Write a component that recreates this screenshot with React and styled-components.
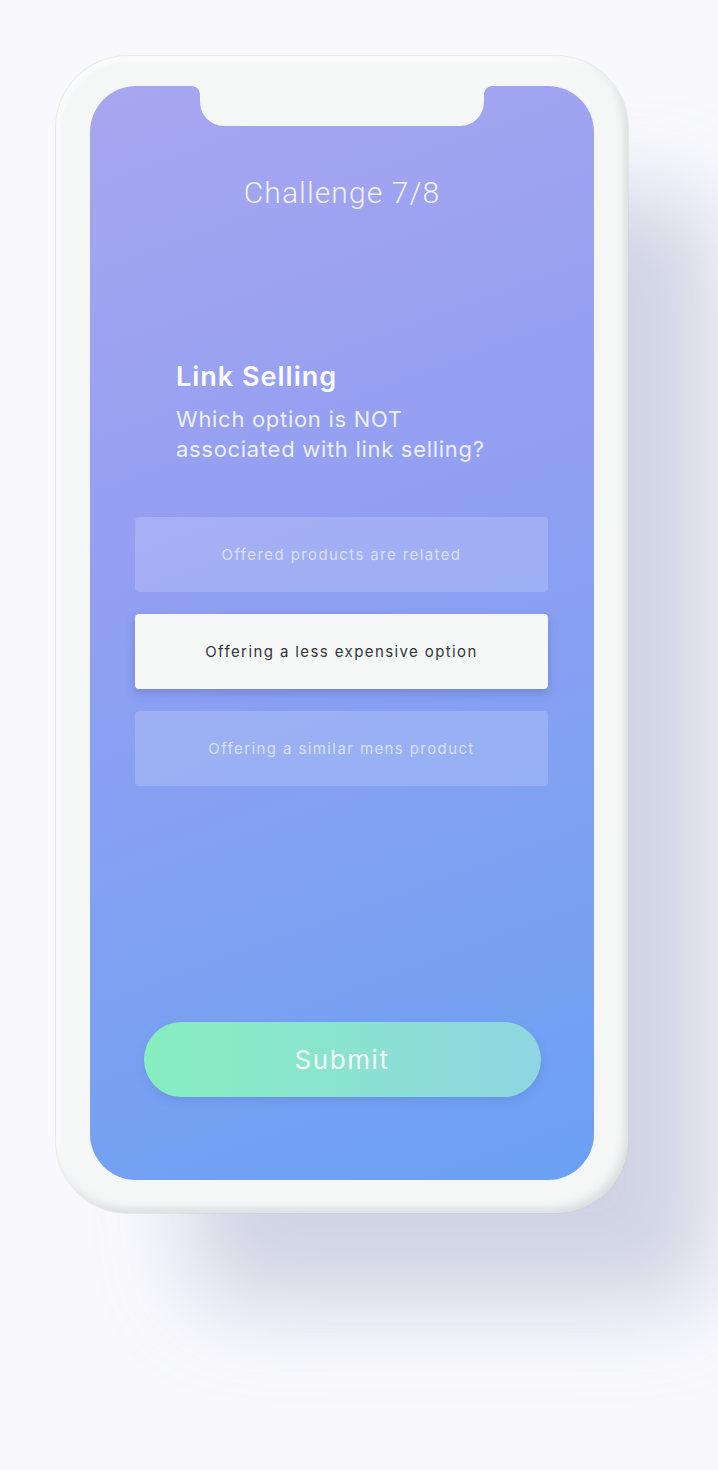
import React from 'react';
import styled, { createGlobalStyle } from 'styled-components';

const FRAME = '#f5f7f7';
const SANS = 'Inter, Roboto, "Liberation Sans", sans-serif';

const GlobalStyle = createGlobalStyle`
  html, body {
    margin: 0;
    padding: 0;
    background: #f9f9fd;
    font-family: ${SANS};
  }
`;

const options = [
  { label: 'Offered products are related', selected: false },
  { label: 'Offering a less expensive option', selected: true },
  { label: 'Offering a similar mens product', selected: false },
];

const App = () => (
  <>
    <GlobalStyle />
    <Page>
      <Phone>
        <Screen>
          <Notch />
          <Title>Challenge 7/8</Title>
          <Question>
            <Topic>Link Selling</Topic>
            <Prompt>
              Which option is NOT
              <br />
              associated with link selling?
            </Prompt>
          </Question>
          <OptionList>
            {options.map((o) => (
              <Option key={o.label} $selected={o.selected}>
                {o.label}
              </Option>
            ))}
          </OptionList>
          <SubmitButton type="button">Submit</SubmitButton>
        </Screen>
      </Phone>
    </Page>
  </>
);

const Page = styled.div`
  width: 718px;
  height: 1470px;
  padding: 56px 0 0 56px;
  box-sizing: border-box;
  overflow: hidden;
`;

const Phone = styled.div`
  width: 572px;
  height: 1157px;
  box-sizing: border-box;
  padding: 30px 34px 33px 34px;
  border-radius: 72px;
  background: ${FRAME};
  box-shadow:
    inset -4px -5px 8px rgba(120, 130, 135, 0.22),
    inset 3px 3px 6px rgba(255, 255, 255, 0.9),
    0 0 0 1px rgba(200, 205, 210, 0.35),
    110px 115px 90px -25px rgba(150, 160, 190, 0.42);
`;

const Screen = styled.div`
  height: 100%;
  box-sizing: border-box;
  border-radius: 46px;
  padding-bottom: 83px;
  display: flex;
  flex-direction: column;
  align-items: center;
  background: linear-gradient(160deg, #a8a6f0 0%, #929ff2 40%, #7fa1f2 70%, #6aa0f3 100%);
`;

const Notch = styled.div`
  position: relative;
  width: 284px;
  height: 40px;
  flex-shrink: 0;
  background: ${FRAME};
  border-radius: 0 0 24px 24px;

  &::before,
  &::after {
    content: '';
    position: absolute;
    top: 0;
    width: 8px;
    height: 8px;
  }

  &::before {
    left: -8px;
    background: radial-gradient(circle at 0 100%, transparent 7.5px, ${FRAME} 8px);
  }

  &::after {
    right: -8px;
    background: radial-gradient(circle at 100% 100%, transparent 7.5px, ${FRAME} 8px);
  }
`;

const Title = styled.h1`
  margin: 50px 0 0;
  font-family: Roboto, "Liberation Sans", sans-serif;
  font-size: 30px;
  line-height: 34px;
  font-weight: 300;
  color: rgba(255, 255, 255, 0.88);
  letter-spacing: 1.1px;
`;

const Question = styled.div`
  align-self: stretch;
  margin-top: 151px;
  padding: 0 30px 0 86px;
`;

const Topic = styled.h2`
  margin: 0;
  font-size: 27px;
  line-height: 32px;
  font-weight: 600;
  color: #fbfbff;
  letter-spacing: 1px;
`;

const Prompt = styled.p`
  margin: 11px 0 0;
  font-size: 22px;
  line-height: 30px;
  font-weight: 400;
  color: rgba(255, 255, 255, 0.85);
  letter-spacing: 0.7px;
`;

const OptionList = styled.div`
  align-self: stretch;
  margin-top: 53px;
  padding: 0 46px 0 45px;
  display: flex;
  flex-direction: column;
  gap: 22px;
`;

const Option = styled.div`
  height: 75px;
  border-radius: 4px;
  display: flex;
  align-items: center;
  justify-content: center;
  font-size: 15px;
  letter-spacing: 1.4px;
  background: ${(p) => (p.$selected ? '#f6f8f8' : 'rgba(255, 255, 255, 0.17)')};
  color: ${(p) => (p.$selected ? '#333638' : 'rgba(255, 255, 255, 0.64)')};
  box-shadow: ${(p) => (p.$selected ? '0 4px 10px rgba(60, 70, 140, 0.28)' : 'none')};
`;

const SubmitButton = styled.button`
  margin-top: auto;
  width: 397px;
  height: 75px;
  border: none;
  border-radius: 38px;
  background: linear-gradient(90deg, #87eebf 0%, #8ae3cf 50%, #8fd5e2 100%);
  box-shadow: 0 4px 10px rgba(60, 80, 150, 0.15);
  font-family: ${SANS};
  font-size: 26px;
  letter-spacing: 1.6px;
  color: rgba(255, 255, 255, 0.9);
  cursor: pointer;
`;

export default App;
